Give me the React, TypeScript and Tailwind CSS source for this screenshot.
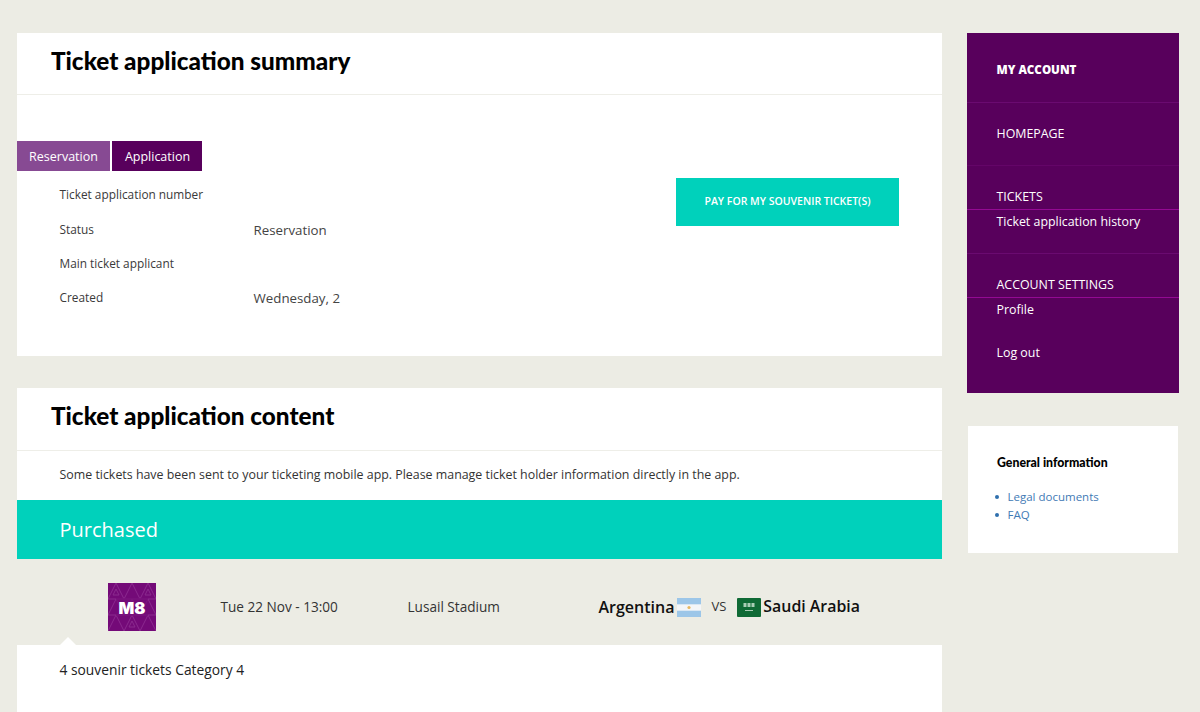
const sans = "font-['Open_Sans',sans-serif]";
const head = "font-['Lato',sans-serif] font-black text-black";

function Row({ label, value, h }: { label: string; value?: string; h: string }) {
  return (
    <div className={`flex items-center ${h}`}>
      <div className="w-[194px] text-[11.85px] text-[#3a3a3a] font-medium">{label}</div>
      {value && <div className="text-[13.3px] text-[#444] translate-y-px">{value}</div>}
    </div>
  );
}

function CardHeader({ children, h }: { children: string; h: string }) {
  return (
    <div className={`${h} border-b border-[#eeeee8] pl-[34px] pt-[11px]`}>
      <h1 className={`${head} text-[24.3px] leading-[33px]`}>{children}</h1>
    </div>
  );
}

function Badge() {
  return (
    <svg width="48" height="48" viewBox="0 0 48 48" className="shrink-0">
      <rect width="48" height="48" fill="#740a78" />
      <g fill="none" stroke="#8a2a8e" strokeWidth="1">
        <path d="M0 16 8 0 16 16 24 0 32 16 40 0 48 16M0 16H48M0 32 8 16 16 32 24 16 32 32 40 16 48 32M0 32H48M0 48 8 32 16 48 24 32 32 48 40 32 48 48" />
        <path d="M5 12 8 6 11 12ZM21 44 24 38 27 44ZM37 12 40 6 43 12Z" />
      </g>
      <rect x="8" y="15" width="32" height="18" fill="#740a78" opacity="0.65" />
      <text x="24" y="30.5" textAnchor="middle" fontFamily="Inter, sans-serif" fontWeight="900" fontSize="16.5" fill="#fff">M8</text>
    </svg>
  );
}

function ArgentinaFlag() {
  return (
    <svg width="24" height="19" viewBox="0 0 24 19" className="shrink-0">
      <rect width="24" height="19" fill="#9cc6e8" />
      <rect y="6.3" width="24" height="6.4" fill="#f4f6f8" />
      <circle cx="12" cy="9.5" r="1.6" fill="#e8b860" />
    </svg>
  );
}

function SaudiFlag() {
  return (
    <svg width="24" height="19" viewBox="0 0 24 19" className="shrink-0">
      <rect width="24" height="19" rx="1" fill="#0f6a35" />
      <rect x="6.5" y="5" width="3" height="4" fill="#a9cdb5" />
      <rect x="10.5" y="5" width="3" height="4" fill="#a9cdb5" />
      <rect x="14.5" y="5" width="3" height="4" fill="#a9cdb5" />
      <rect x="8" y="12" width="8" height="1" fill="#a9cdb5" />
    </svg>
  );
}

export default function App() {
  return (
    <div className={`${sans} h-[712px] overflow-hidden bg-[#ecece4] flex pt-[33px] pl-[17px]`}>
      <main className="w-[925px] shrink-0">
        <section className="bg-white h-[323px]">
          <CardHeader h="h-[62px]">Ticket application summary</CardHeader>
          <div className="flex pt-[46px]">
            <div className="w-[659px]">
              <div className="flex gap-[2px] h-[30px] text-[12.5px] text-white">
                <div className="w-[93px] bg-[#874a93] flex items-center justify-center pt-[2px]">Reservation</div>
                <div className="w-[90px] bg-[#58005c] flex items-center justify-center pt-[2px] pl-[1px]">Application</div>
              </div>
              <div className="pl-[42.5px] pt-[6px]">
                <Row label="Ticket application number" h="h-[35px]" />
                <Row label="Status" value="Reservation" h="h-[35px]" />
                <Row label="Main ticket applicant" h="h-[34px]" />
                <Row label="Created" value="Wednesday, 2" h="h-[34px]" />
              </div>
            </div>
            <div className="pt-[37px]">
              <div className="w-[223px] h-[48px] bg-[#00d1bb] flex items-center justify-center text-[10.5px] font-semibold text-white">
                PAY FOR MY SOUVENIR TICKET(S)
              </div>
            </div>
          </div>
        </section>

        <section className="mt-[32px]">
          <div className="bg-white">
            <CardHeader h="h-[63px]">Ticket application content</CardHeader>
            <p className="h-[49px] pl-[42.5px] flex items-center text-[12.4px] text-[#333]">
              Some tickets have been sent to your ticketing mobile app. Please manage ticket holder information directly in the app.
            </p>
          </div>
          <div className="h-[59px] bg-[#00d1bb] pl-[42.5px] flex items-center text-[20px] text-white">Purchased</div>
          <div className="relative h-[86px] flex items-center pt-[10px]">
            <div className="ml-[91px]"><Badge /></div>
            <div className="ml-[64.5px] w-[187px] text-[13.6px] text-[#333]">Tue 22 Nov - 13:00</div>
            <div className="w-[191px] text-[13.6px] text-[#333]">Lusail Stadium</div>
            <div className="flex items-center text-[#111] text-[16px] font-semibold">
              <span>Argentina</span>
              <span className="ml-[3px]"><ArgentinaFlag /></span>
              <span className="ml-[10px] mr-[11px] text-[13px] font-normal text-[#333]">VS</span>
              <SaudiFlag />
              <span className="ml-[2px] text-[15.9px]">Saudi Arabia</span>
            </div>
            <div className="absolute bottom-0 left-[43px] w-0 h-0 border-l-[8px] border-r-[8px] border-b-[8px] border-l-transparent border-r-transparent border-b-white" />
          </div>
          <div className="bg-white h-[80px] pl-[42.5px] pt-[15px] text-[13.8px] font-medium text-[#222]">
            4 souvenir tickets Category 4
          </div>
        </section>
      </main>

      <aside className="ml-[25px] w-[212px] shrink-0">
        <nav className="h-[360px] bg-[#58005c] text-white text-[12.4px]">
          <div className="h-[70px] pl-[29.5px] pt-[4px] flex items-center border-b border-[#6a0a70] font-extrabold text-[11.6px]">MY ACCOUNT</div>
          <div className="h-[63px] pl-[29.5px] flex items-center border-b border-[#640568]">HOMEPAGE</div>
          <div className="h-[88px] border-b border-[#6a0a70]">
            <div className="h-[44px] pl-[29.5px] flex items-end border-b border-[#930a93]"><span className="pb-[2px]">TICKETS</span></div>
            <div className="pl-[29.5px] pt-[3px]">Ticket application history</div>
          </div>
          <div className="h-[44px] pl-[29.5px] flex items-end border-b border-[#930a93]"><span className="pb-[2px]">ACCOUNT SETTINGS</span></div>
          <div className="pl-[29.5px] pt-[3px]">Profile</div>
          <div className="pl-[29.5px] pt-[24px]">Log out</div>
        </nav>
        <div className="mt-[33px] mx-[1px] h-[127px] bg-white pl-[29px] pt-[29px]">
          <h2 className={`${head} text-[12.3px] leading-[16px]`}>General information</h2>
          <ul className="mt-[17px] text-[11.5px] leading-[18px] text-[#3f7ab5]">
            <li className="flex items-center"><span className="w-[3.5px] h-[3.5px] rounded-full bg-[#2f6fad] mr-[9px] -ml-[2px]" />Legal documents</li>
            <li className="flex items-center"><span className="w-[3.5px] h-[3.5px] rounded-full bg-[#2f6fad] mr-[9px] -ml-[2px]" />FAQ</li>
          </ul>
        </div>
      </aside>
    </div>
  );
}
